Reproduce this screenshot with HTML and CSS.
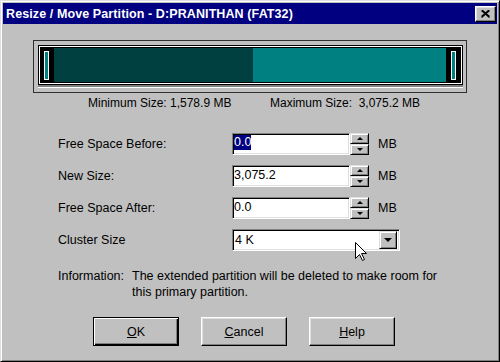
FILE: index.html
```html
<!DOCTYPE html>
<html>
<head>
<meta charset="utf-8">
<title>Resize / Move Partition</title>
<link rel="stylesheet" href="styles.css">
</head>
<body>
<div class="window">
  <div class="titlebar">
    <span class="title">Resize / Move Partition - D:PRANITHAN (FAT32)</span>
    <div class="close">
      <svg width="9" height="8" viewBox="0 0 9 8"><path d="M0.5 0.5 L8.5 7.5 M8.5 0.5 L0.5 7.5 M1.5 0.5 L8.5 6.6 M7.5 0.5 L0.5 6.6" stroke="#000" stroke-width="1.4" fill="none"/></svg>
    </div>
  </div>

  <div class="frame">
    <div class="track">
      <div class="bar">
        <div class="cap"><span class="grip"></span></div>
        <div class="used"></div>
        <div class="free"></div>
        <div class="cap cap-right"><span class="grip"></span></div>
      </div>
    </div>
  </div>

  <div class="limits">
    <span>Minimum Size: 1,578.9 MB</span>
    <span>Maximum Size:&nbsp; 3,075.2 MB</span>
  </div>

  <div class="form">
    <span class="lbl">Free Space Before:</span>
    <div class="field">
      <div class="input"><span class="selected">0.0</span></div>
      <div class="spin"><span class="spin-btn"><i class="tri-up"></i></span><span class="spin-btn"><i class="tri-down"></i></span></div>
      <span class="unit">MB</span>
    </div>

    <span class="lbl">New Size:</span>
    <div class="field">
      <div class="input"><span class="val">3,075.2</span></div>
      <div class="spin"><span class="spin-btn"><i class="tri-up"></i></span><span class="spin-btn"><i class="tri-down"></i></span></div>
      <span class="unit">MB</span>
    </div>

    <span class="lbl">Free Space After:</span>
    <div class="field">
      <div class="input"><span class="val">0.0</span></div>
      <div class="spin"><span class="spin-btn"><i class="tri-up"></i></span><span class="spin-btn"><i class="tri-down"></i></span></div>
      <span class="unit">MB</span>
    </div>

    <span class="lbl">Cluster Size</span>
    <div class="field">
      <div class="select"><span class="sel-text">4 K</span><span class="drop"><i class="tri-drop"></i></span></div>
    </div>
  </div>

  <div class="info">
    <span class="info-label">Information:</span>
    <span class="info-text">The extended partition will be deleted to make room for<br>this primary partition.</span>
  </div>

  <div class="buttons">
    <div class="btn btn-default"><u>O</u>K</div>
    <div class="btn"><u>C</u>ancel</div>
    <div class="btn"><u>H</u>elp</div>
  </div>

  <svg class="cursor" width="13" height="20" viewBox="0 0 13 20"><path d="M0.5 0.5 L0.5 16.5 L4.5 12.5 L7.5 18.5 L9.5 17.5 L6.5 11.5 L11.5 11.5 Z" fill="#fff" stroke="#000" stroke-width="1"/></svg>
</div>
</body>
</html>
```
FILE: styles.css
```css
* { box-sizing: border-box; }

body {
  margin: 0;
  font-family: "Liberation Sans", Arial, sans-serif;
  font-size: 12.5px;
  color: #000;
  background: #c0c0c0;
}

.window {
  position: relative;
  width: 500px;
  height: 362px;
  background: #c0c0c0;
  border: 1px solid;
  border-color: #dfdfdf #000 #000 #dfdfdf;
  box-shadow: inset 1px 1px #fff, inset -1px -1px #808080;
  padding: 2px;
}

.titlebar {
  height: 21px;
  background: #000080;
  display: flex;
  align-items: center;
  justify-content: space-between;
  padding: 0 1px 0 3px;
}

.title {
  color: #fff;
  font-weight: bold;
  font-size: 12.5px;
  letter-spacing: 0.1px;
}

.close {
  width: 21px;
  height: 16px;
  background: #c0c0c0;
  border: 1px solid;
  border-color: #fff #000 #000 #fff;
  box-shadow: inset -1px -1px #808080, inset 1px 1px #dfdfdf;
  display: flex;
  align-items: center;
  justify-content: center;
}

.frame {
  width: 434px;
  height: 53px;
  margin: 16px 0 0 30px;
  border: 1px solid #303030;
  padding: 4px 3px 0 4px;
}

.track {
  height: 40px;
  border: 1px solid #000;
  background: #fff;
  padding: 1px;
  box-shadow: 0 2px #808080, 0 3px #fff;
}

.bar {
  display: flex;
  height: 100%;
  background: #000;
  padding: 1px 0;
}

.cap {
  width: 14px;
  display: flex;
  align-items: center;
  padding-left: 4px;
}

.cap-right {
  width: 15px;
  padding-left: 5px;
}

.grip {
  width: 5px;
  height: 29px;
  border: 1px solid #fff;
  background: #008080;
}

.used {
  width: 199px;
  background: #004040;
}

.free {
  width: 193px;
  background: #008080;
}

.limits {
  display: grid;
  grid-template-columns: 182px auto;
  padding-left: 85px;
  margin-top: 3px;
  line-height: 15px;
  font-size: 12px;
}

.form {
  display: grid;
  grid-template-columns: 174px auto;
  row-gap: 10px;
  align-items: center;
  padding-left: 55px;
  margin-top: 22px;
}

.field {
  display: flex;
  align-items: center;
  height: 22px;
}

.input {
  width: 118px;
  height: 22px;
  background: #fff;
  border: 1px solid;
  border-color: #808080 #fff #fff #808080;
  box-shadow: inset 1px 1px #000, inset -1px -1px #dfdfdf;
  padding: 1px 1px;
  display: flex;
  align-items: flex-start;
  line-height: 15px;
}

.selected {
  background: #000080;
  color: #fff;
}

.val { padding-top: 1px; }

.spin {
  width: 19px;
  height: 22px;
  display: flex;
  flex-direction: column;
}

.spin-btn {
  flex: 1;
  background: #c0c0c0;
  border: 1px solid;
  border-color: #dfdfdf #000 #000 #dfdfdf;
  box-shadow: inset 1px 1px #fff, inset -1px -1px #808080;
  display: flex;
  align-items: center;
  justify-content: center;
}

.tri-up {
  width: 0;
  height: 0;
  border-left: 3px solid transparent;
  border-right: 3px solid transparent;
  border-bottom: 3px solid #000;
}

.tri-down {
  width: 0;
  height: 0;
  border-left: 3px solid transparent;
  border-right: 3px solid transparent;
  border-top: 3px solid #000;
}

.unit {
  margin-left: 9px;
}

.select {
  width: 168px;
  height: 22px;
  background: #fff;
  border: 1px solid;
  border-color: #808080 #fff #fff #808080;
  box-shadow: inset 1px 1px #000, inset -1px -1px #dfdfdf;
  padding: 2px;
  display: flex;
  align-items: center;
  justify-content: space-between;
}

.sel-text { padding-left: 0; }

.drop {
  width: 18px;
  height: 18px;
  background: #c0c0c0;
  border: 1px solid;
  border-color: #dfdfdf #000 #000 #dfdfdf;
  box-shadow: inset 1px 1px #fff, inset -1px -1px #808080;
  display: flex;
  align-items: center;
  justify-content: center;
}

.tri-drop {
  width: 0;
  height: 0;
  border-left: 4px solid transparent;
  border-right: 4px solid transparent;
  border-top: 4px solid #000;
}

.info {
  display: grid;
  grid-template-columns: 74px auto;
  padding-left: 55px;
  margin-top: 17px;
  line-height: 16px;
}

.buttons {
  display: flex;
  gap: 22px;
  padding-left: 90px;
  margin-top: 17px;
}

.btn {
  width: 86px;
  height: 29px;
  background: #c0c0c0;
  border: 1px solid;
  border-color: #fff #000 #000 #fff;
  box-shadow: inset -1px -1px #808080, inset 1px 1px #dfdfdf;
  display: flex;
  align-items: center;
  justify-content: center;
}

.btn-default {
  border: 1px solid #000;
  box-shadow: inset 1px 1px #fff, inset -1px -1px #000, inset -2px -2px #808080;
}

.cursor {
  position: absolute;
  left: 354px;
  top: 241px;
}
```
